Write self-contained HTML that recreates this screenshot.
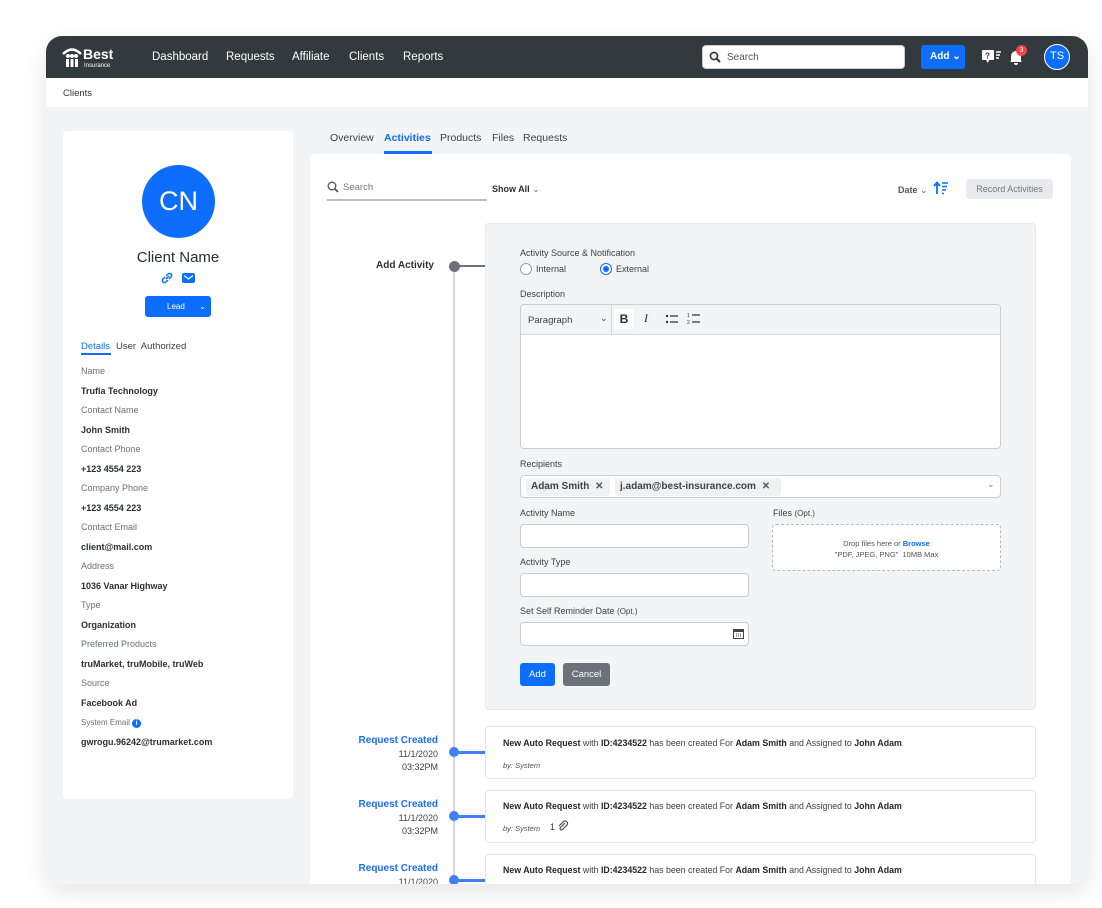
<!DOCTYPE html>
<html><head><meta charset="utf-8"><style>
*{margin:0;padding:0;box-sizing:border-box}
body{width:1102px;height:908px;background:#fff;font-family:"Liberation Sans",sans-serif;position:relative;overflow:hidden;color:#2b2f33}
.a{position:absolute}
#frame{left:46px;top:36px;width:1042px;height:848px;border-radius:16px 16px 16px 16px;overflow:hidden;background:#f3f4f6;box-shadow:0 8px 24px rgba(0,0,0,.10)}
.nav{left:0;top:0;width:1042px;height:42px;background:#323a3d}
.nav .l{color:#fff;font-size:11.5px;top:15px}
.lbl{font-size:9px;color:#6b7279;line-height:17px}
.val{font-size:9px;color:#2b2f33;font-weight:bold;line-height:22px}
.f{font-size:9px;color:#3c4248}
.inp{background:#fff;border:1px solid #c9cdd2;border-radius:4px}
.card{background:#fff;border:1px solid #e3e5e8;border-radius:4px}
.ct{font-size:8.8px;color:#3c4248}
.ct b{color:#23272b}
.rc{font-size:10px;color:#1a6cf5;font-weight:bold;text-align:right;width:100px}
.dt{font-size:9px;color:#3c4248;text-align:right;width:100px;line-height:12.5px}
.dot{width:10px;height:10px;border-radius:50%;background:#3b82f6}
.hl{height:3px;background:#3b82f6}
</style></head><body>
<div id="frame" class="a">
 <div class="a nav">
  <svg class="a" style="left:16px;top:8px" width="58" height="26" viewBox="0 0 58 26"><path d="M1 10 Q10 1 19 10" fill="none" stroke="#fff" stroke-width="2.5"/><g fill="#fff"><circle cx="6" cy="12" r="2"/><circle cx="10" cy="12" r="2"/><circle cx="14" cy="12" r="2"/><rect x="4" y="15" width="3" height="8"/><rect x="8.5" y="15" width="3" height="8"/><rect x="13" y="15" width="3" height="8"/></g><text x="21" y="15" fill="#fff" font-size="14" font-weight="bold" font-family="Liberation Sans">Best</text><text x="22" y="23" fill="#fff" font-size="6" font-family="Liberation Sans">Insurance</text></svg>
  <div class="a l" style="left:106px">Dashboard</div>
  <div class="a l" style="left:180px">Requests</div>
  <div class="a l" style="left:246px">Affiliate</div>
  <div class="a l" style="left:303px">Clients</div>
  <div class="a l" style="left:357px">Reports</div>
  <div class="a" style="left:656px;top:9px;width:203px;height:24px;background:#fff;border-radius:4px;border:1px solid #ccc"></div>
  <svg class="a" style="left:663px;top:15px" width="12" height="12"><circle cx="5" cy="5" r="3.6" stroke="#333" stroke-width="1.6" fill="none"/><path d="M7.5 7.5 L11 11" stroke="#333" stroke-width="2"/></svg>
  <div class="a" style="left:681px;top:16px;font-size:10px;color:#555">Search</div>
  <div class="a" style="left:875px;top:9px;width:44px;height:24px;background:#0d6efd;border-radius:3px;color:#fff;font-size:10px;font-weight:bold;padding:6px 0 0 9px">Add ⌄</div>
  <svg class="a" style="left:935px;top:13px" width="22" height="16"><rect x="1" y="1" width="12" height="10" rx="1" fill="#fff"/><path d="M5 11 L7 14 L8 11Z" fill="#fff"/><text x="4" y="9.5" font-size="8" font-weight="bold" fill="#333" font-family="Liberation Sans">?</text><path d="M15 3h5M15 6h4M15 9h3" stroke="#fff" stroke-width="1.4"/></svg>
  <svg class="a" style="left:962px;top:12px" width="16" height="18"><path d="M3 13 V8 a5 5 0 0 1 10 0 V13 L14 14 H2Z M6 15h4 a2 2 0 0 1 -4 0" fill="#fff"/></svg>
  <div class="a" style="left:970px;top:9px;width:11px;height:11px;border-radius:50%;background:#ef4444;color:#fff;font-size:7px;text-align:center;line-height:11px">3</div>
  <div class="a" style="left:998px;top:8px;width:26px;height:26px;border-radius:50%;background:#0d6efd;border:1.5px solid #fff;color:#fff;font-size:11px;text-align:center;line-height:23px">TS</div>
 </div>
 <div class="a" style="left:0;top:42px;width:1042px;height:29px;background:#fff"></div>
 <div class="a" style="left:17px;top:52px;font-size:9.5px;color:#333">Clients</div>

 <div class="a" style="left:17px;top:95px;width:230px;height:668px;background:#fff;border-radius:4px"></div>
 <div class="a" style="left:96px;top:129px;width:73px;height:73px;border-radius:50%;background:#0d6efd;color:#fff;font-size:27px;text-align:center;line-height:73px">CN</div>
 <div class="a" style="left:17px;top:213px;width:230px;text-align:center;font-size:15px;color:#2b2f33">Client Name</div>
 <svg class="a" style="left:115px;top:236px" width="12" height="12"><path d="M5 7 L8 4 M4 5 L2 7 a2 2 0 0 0 3 3 L7 8 M8 7 L10 5 a2 2 0 0 0 -3 -3 L5 4" stroke="#0d6efd" stroke-width="1.5" fill="none"/></svg>
 <svg class="a" style="left:136px;top:237px" width="13" height="10"><rect width="13" height="10" rx="2" fill="#0d6efd"/><path d="M2 2.5 L6.5 6 L11 2.5" stroke="#fff" stroke-width="1.2" fill="none"/></svg>
 <div class="a" style="left:99px;top:260px;width:66px;height:21px;background:#0d6efd;border-radius:3px;color:#fff;font-size:8px;line-height:21px;padding-left:22px">Lead<span style="position:absolute;right:5px">⌄</span></div>
 <div class="a" style="left:35px;top:305px;font-size:9.5px;color:#0d6efd">Details</div>
 <div class="a" style="left:35px;top:317px;width:30px;height:1.5px;background:#0d6efd"></div>
 <div class="a" style="left:70px;top:305px;font-size:9.5px;color:#3c4248">User&nbsp; Authorized</div>
 <div class="a" style="left:35px;top:327px">
  <div class="lbl">Name</div><div class="val">Trufla Technology</div>
  <div class="lbl">Contact Name</div><div class="val">John Smith</div>
  <div class="lbl">Contact Phone</div><div class="val">+123 4554 223</div>
  <div class="lbl">Company Phone</div><div class="val">+123 4554 223</div>
  <div class="lbl">Contact Email</div><div class="val">client@mail.com</div>
  <div class="lbl">Address</div><div class="val">1036 Vanar Highway</div>
  <div class="lbl">Type</div><div class="val">Organization</div>
  <div class="lbl">Preferred Products</div><div class="val">truMarket, truMobile, truWeb</div>
  <div class="lbl">Source</div><div class="val">Facebook Ad</div>
  <div class="lbl" style="font-size:8px">System Email <span style="display:inline-block;width:9px;height:9px;border-radius:50%;background:#0d6efd;color:#fff;font-size:7px;text-align:center;line-height:9px;font-weight:bold">i</span></div><div class="val">gwrogu.96242@trumarket.com</div>
 </div>

 <div class="a" style="left:284px;top:96px;font-size:10.5px;color:#3c4248">Overview</div>
 <div class="a" style="left:338px;top:96px;font-size:10.5px;color:#0d6efd;font-weight:bold">Activities</div>
 <div class="a" style="left:338px;top:115px;width:48px;height:3px;background:#0d6efd"></div>
 <div class="a" style="left:394px;top:96px;font-size:10.5px;color:#3c4248">Products</div>
 <div class="a" style="left:446px;top:96px;font-size:10.5px;color:#3c4248">Files</div>
 <div class="a" style="left:477px;top:96px;font-size:10.5px;color:#3c4248">Requests</div>

 <div class="a" style="left:264px;top:118px;width:761px;height:740px;background:#fff;border-radius:4px"></div>
 <svg class="a" style="left:281px;top:145px" width="12" height="12"><circle cx="5" cy="5" r="3.8" stroke="#555" stroke-width="1.3" fill="none"/><path d="M8 8 L11 11" stroke="#555" stroke-width="1.8"/></svg>
 <div class="a" style="left:297px;top:146px;font-size:9.5px;color:#777">Search</div>
 <div class="a" style="left:281px;top:163px;width:160px;height:1.5px;background:#b8bcc0"></div>
 <div class="a" style="left:446px;top:148px;font-size:9px;color:#2b2f33;font-weight:bold">Show All <span style="font-weight:normal;color:#666">⌄</span></div>
 <div class="a" style="left:852px;top:149px;font-size:9px;color:#555;font-weight:bold">Date <span style="font-weight:normal">⌄</span></div>
 <svg class="a" style="left:887px;top:145px" width="16" height="14"><path d="M4 13 V2 M1 5 L4 1.5 L7 5" stroke="#0d6efd" stroke-width="1.8" fill="none"/><path d="M9 2h6M9 5.5h5M9 9h4M9 12.5h2" stroke="#0d6efd" stroke-width="1.6"/></svg>
 <div class="a" style="left:920px;top:143px;width:87px;height:20px;background:#e8eaed;border-radius:4px;font-size:9px;color:#777;text-align:center;line-height:20px">Record Activities</div>

 <div class="a" style="left:407px;top:230px;width:2px;height:620px;background:#d4d7db"></div>
 <div class="a" style="left:330px;top:224px;font-size:10px;font-weight:bold;color:#2b2f33">Add Activity</div>
 <div class="a" style="left:403px;top:225px;width:11px;height:11px;border-radius:50%;background:#6b7279"></div>
 <div class="a" style="left:412px;top:229px;width:28px;height:2px;background:#6b7279"></div>

 <div class="a" style="left:439px;top:187px;width:551px;height:487px;background:#f3f4f6;border-radius:4px;border:1px solid #e6e8eb"></div>
 <div class="a f" style="left:474px;top:212px">Activity Source &amp; Notification</div>
 <div class="a" style="left:474px;top:227px;width:12px;height:12px;border-radius:50%;border:1px solid #9aa0a6;background:#fff"></div>
 <div class="a f" style="left:490px;top:228px">Internal</div>
 <div class="a" style="left:554px;top:227px;width:12px;height:12px;border-radius:50%;border:1.5px solid #0d6efd;background:#fff"><div style="margin:2px;width:6px;height:6px;border-radius:50%;background:#0d6efd"></div></div>
 <div class="a f" style="left:570px;top:228px">External</div>
 <div class="a f" style="left:474px;top:253px">Description</div>
 <div class="a" style="left:474px;top:268px;width:481px;height:145px;background:#fff;border:1px solid #c9cdd2;border-radius:4px;overflow:hidden">
  <div style="height:30px;background:#f3f4f6;border-bottom:1px solid #d4d7db;position:relative">
   <div class="a f" style="left:7px;top:10px;font-size:9.5px">Paragraph</div>
   <div class="a f" style="left:79px;top:8px">⌄</div>
   <div class="a" style="left:90px;top:0;width:1px;height:30px;background:#d4d7db"></div>
   <div class="a" style="left:93px;top:4px;width:20px;height:20px;background:#fff;font-weight:bold;font-size:12px;text-align:center;line-height:20px">B</div>
   <div class="a" style="left:123px;top:6px;font-size:12px;font-style:italic;font-family:'Liberation Serif',serif">I</div>
   <svg class="a" style="left:144px;top:8px" width="14" height="12"><circle cx="2" cy="3" r="1.2" fill="#333"/><circle cx="2" cy="9" r="1.2" fill="#333"/><path d="M5 3h8M5 9h8" stroke="#333" stroke-width="1.2"/></svg>
   <svg class="a" style="left:166px;top:7px" width="14" height="13"><text x="0" y="5" font-size="5" fill="#333">1</text><text x="0" y="12" font-size="5" fill="#333">2</text><path d="M5 3h8M5 10h8" stroke="#333" stroke-width="1.2"/></svg>
  </div>
 </div>
 <div class="a f" style="left:474px;top:423px">Recipients</div>
 <div class="a inp" style="left:474px;top:439px;width:481px;height:23px"></div>
 <div class="a" style="left:480px;top:442px;width:84px;height:18px;background:#f0f1f3;border-radius:3px;font-size:10px;font-weight:bold;color:#3c4248;line-height:18px;padding-left:5px">Adam Smith <span style="color:#555;margin-left:3px">✕</span></div>
 <div class="a" style="left:569px;top:442px;width:166px;height:18px;background:#f0f1f3;border-radius:3px;font-size:10px;font-weight:bold;color:#3c4248;line-height:18px;padding-left:5px">j.adam@best-insurance.com <span style="color:#555;margin-left:3px">✕</span></div>
 <div class="a f" style="left:941px;top:443px;color:#777">⌄</div>
 <div class="a f" style="left:474px;top:472px">Activity Name</div>
 <div class="a inp" style="left:474px;top:488px;width:229px;height:24px"></div>
 <div class="a f" style="left:474px;top:521px">Activity Type</div>
 <div class="a inp" style="left:474px;top:537px;width:229px;height:24px"></div>
 <div class="a f" style="left:474px;top:570px">Set Self Reminder Date <span style="font-size:8px">(Opt.)</span></div>
 <div class="a inp" style="left:474px;top:586px;width:229px;height:24px"></div>
 <svg class="a" style="left:687px;top:592px" width="11" height="11"><rect x="0.5" y="1.5" width="10" height="9" fill="none" stroke="#444"/><rect x="0.5" y="1.5" width="10" height="2.5" fill="#444"/><path d="M3 6h1M5 6h1M7 6h1M3 8h1M5 8h1M7 8h1" stroke="#444"/></svg>
 <div class="a f" style="left:727px;top:472px">Files <span style="font-size:8px">(Opt.)</span></div>
 <div class="a" style="left:726px;top:488px;width:229px;height:47px;border:1px dashed #b8bcc0;border-radius:4px;background:#fff;text-align:center;font-size:7.5px;color:#555;padding-top:13px;line-height:11px">Drop files here or <b style="color:#0d6efd">Browse</b><br>"PDF, JPEG, PNG"&nbsp; 10MB Max</div>
 <div class="a" style="left:474px;top:627px;width:35px;height:23px;background:#0d6efd;border-radius:3px;color:#fff;font-size:9.5px;text-align:center;line-height:23px">Add</div>
 <div class="a" style="left:517px;top:627px;width:47px;height:23px;background:#6b7279;border-radius:3px;color:#fff;font-size:9.5px;text-align:center;line-height:23px">Cancel</div>

 <div class="a rc" style="left:292px;top:699px">Request Created</div>
 <div class="a dt" style="left:292px;top:712px">11/1/2020<br>03:32PM</div>
 <div class="a dot" style="left:403px;top:711px"></div><div class="a hl" style="left:410px;top:715px;width:30px"></div>
 <div class="a card" style="left:439px;top:690px;width:551px;height:53px"></div>
 <div class="a ct" style="left:457px;top:702px"><b>New Auto Request</b> with <b>ID:4234522</b> has been created For <b>Adam Smith</b> and Assigned to <b>John Adam</b></div>
 <div class="a" style="left:457px;top:725px;font-size:7.5px;font-style:italic;color:#555">by: System</div>

 <div class="a rc" style="left:292px;top:763px">Request Created</div>
 <div class="a dt" style="left:292px;top:776px">11/1/2020<br>03:32PM</div>
 <div class="a dot" style="left:403px;top:775px"></div><div class="a hl" style="left:410px;top:779px;width:30px"></div>
 <div class="a card" style="left:439px;top:754px;width:551px;height:53px"></div>
 <div class="a ct" style="left:457px;top:765px"><b>New Auto Request</b> with <b>ID:4234522</b> has been created For <b>Adam Smith</b> and Assigned to <b>John Adam</b></div>
 <div class="a" style="left:457px;top:788px;font-size:7.5px;font-style:italic;color:#555">by: System</div>
 <div class="a" style="left:504px;top:786px;font-size:9px;color:#333">1</div>
 <svg class="a" style="left:511px;top:784px" width="12" height="12"><path d="M8 3 L3.5 7.5 a1.3 1.3 0 0 0 2 2 L10 5 a2.5 2.5 0 0 0 -3.5 -3.5 L2 6" stroke="#444" stroke-width="1.1" fill="none"/></svg>

 <div class="a rc" style="left:292px;top:827px">Request Created</div>
 <div class="a dt" style="left:292px;top:840px">11/1/2020</div>
 <div class="a dot" style="left:403px;top:839px"></div><div class="a hl" style="left:410px;top:843px;width:30px"></div>
 <div class="a card" style="left:439px;top:818px;width:551px;height:53px"></div>
 <div class="a ct" style="left:457px;top:829px"><b>New Auto Request</b> with <b>ID:4234522</b> has been created For <b>Adam Smith</b> and Assigned to <b>John Adam</b></div>
</div>
</body></html>
